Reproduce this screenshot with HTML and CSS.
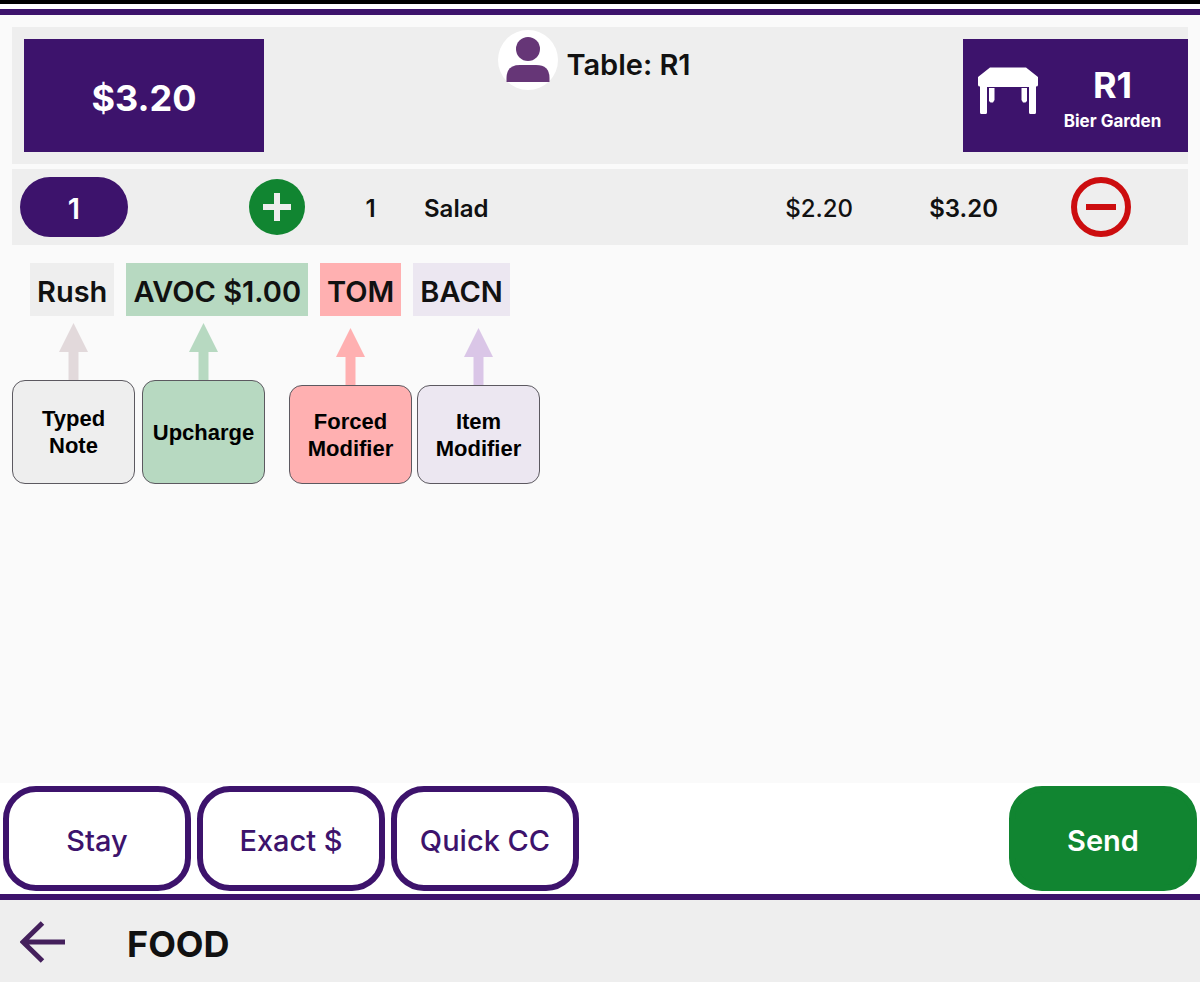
FILE: index.html
```
<!DOCTYPE html>
<html lang="en">
<head>
<meta charset="utf-8">
<title>Table R1</title>
<link rel="stylesheet" href="styles.css">
</head>
<body>
<div class="topbar"></div>
<main class="order">
  <header class="summary">
    <button class="total" type="button">$3.20</button>
    <div class="guest">
      <svg class="avatar" viewBox="0 0 60 60" aria-hidden="true">
        <circle cx="30" cy="30" r="30" fill="#fff"/>
        <circle cx="30" cy="19" r="12" fill="#663677"/>
        <path d="M8.500 52V48Q8.500 35 22 35H38Q51.500 35 51.500 48V52Z" fill="#663677"/>
      </svg>
      <h1 class="guest-name">Table: R1</h1>
    </div>
    <button class="table-card" type="button">
      <svg class="table-icon" viewBox="0 0 60 48" aria-hidden="true">
        <g fill="#fff">
          <path d="M12 .5H48L60 10V18Q60 19.500 58 19.500V45.500Q58 47 56.500 47H52.500Q51 47 51 45.500V20H9V45.500Q9 47 7.500 47H3.500Q2 47 2 45.500V19.500Q0 19.500 0 18V10Z"/>
          <path d="M11 21H16.500V33L15 35.500H12.500L11 34Z"/>
          <path d="M43.500 21H49V34L47.500 35.500H45L43.500 33Z"/>
        </g>
      </svg>
      <span class="table-text"><strong class="table-id">R1</strong><span class="table-area">Bier Garden</span></span>
    </button>
  </header>

  <section class="line">
    <button class="seat" type="button">1</button>
    <button class="icon-button" type="button" aria-label="Add one">
      <svg class="icon-add" viewBox="0 0 56 56"><circle cx="28" cy="28" r="28" fill="#118531"/><path d="M28 14V42M14 28H42" stroke="#eee" stroke-width="6"/></svg>
    </button>
    <span class="quantity">1</span>
    <span class="item">Salad</span>
    <span class="price">$2.20</span>
    <span class="price price-total">$3.20</span>
    <button class="icon-button icon-button-end" type="button" aria-label="Remove one">
      <svg class="icon-remove" viewBox="0 0 60 60"><circle cx="30" cy="30" r="27" fill="none" stroke="#cc0d0f" stroke-width="6"/><path d="M15 30H45" stroke="#cc0d0f" stroke-width="6"/></svg>
    </button>
  </section>

  <ul class="tags">
    <li class="tag note">Rush</li>
    <li class="tag upcharge">AVOC $1.00</li>
    <li class="tag forced">TOM</li>
    <li class="tag modifier">BACN</li>
  </ul>

  <div class="legend">
    <div class="legend-pair">
      <div class="legend-item">
        <svg class="arrow" viewBox="0 0 29 57" aria-hidden="true"><path d="M14.500 0L29 29H19.500V57H9.500V29H0Z" fill="#e2d9db"/></svg>
        <div class="legend-box note">Typed Note</div>
      </div>
      <div class="legend-item">
        <svg class="arrow" viewBox="0 0 29 57" aria-hidden="true"><path d="M14.500 0L29 29H19.500V57H9.500V29H0Z" fill="#b7d9c1"/></svg>
        <div class="legend-box upcharge">Upcharge</div>
      </div>
    </div>
    <div class="legend-pair legend-pair-short">
      <div class="legend-item">
        <svg class="arrow" viewBox="0 0 29 57" aria-hidden="true"><path d="M14.500 0L29 29H19.500V57H9.500V29H0Z" fill="#ffb0b1"/></svg>
        <div class="legend-box forced">Forced Modifier</div>
      </div>
      <div class="legend-item">
        <svg class="arrow" viewBox="0 0 29 57" aria-hidden="true"><path d="M14.500 0L29 29H19.500V57H9.500V29H0Z" fill="#dac6e7"/></svg>
        <div class="legend-box modifier">Item Modifier</div>
      </div>
    </div>
  </div>
</main>

<div class="actions">
  <button class="action" type="button">Stay</button>
  <button class="action" type="button">Exact $</button>
  <button class="action" type="button">Quick CC</button>
  <button class="action send" type="button">Send</button>
</div>
<footer class="category">
  <button class="back" type="button" aria-label="Back">
    <svg class="back-icon" viewBox="0 0 46 42"><path d="M45 21H4M22.500 2L3 21L22.500 40" fill="none" stroke="#44205c" stroke-width="5"/></svg>
  </button>
  <h2 class="category-name">FOOD</h2>
</footer>
</body>
</html>
```
FILE: styles.css
```
* { box-sizing: border-box; }
body {
  margin: 0;
  min-height: 100vh;
  display: flex;
  flex-direction: column;
  background: #fff;
  color: #111;
  font-family: Inter, "Liberation Sans", sans-serif;
}
button {
  margin: 0;
  padding: 0;
  border: 0;
  background: none;
  color: inherit;
  font: inherit;
}
h1, h2 { margin: 0; }
svg { display: block; }

.topbar {
  height: 15px;
  border-top: 4px solid #000;
  border-bottom: 6px solid #3d136c;
}
.order {
  flex: 1;
  padding: 12px;
  background: #fafafa;
}

.summary {
  display: grid;
  grid-template-columns: 240px 1fr 225px;
  height: 137px;
  padding: 12px 0 12px 12px;
  background: #eee;
}
.total {
  background: #3d136c;
  color: #fff;
  font-size: 36px;
  font-weight: 700;
  padding-top: 4px;
}
.guest {
  display: flex;
  justify-content: center;
  align-items: center;
  gap: 8px;
  height: 60px;
  margin: -9px 38px 0 0;
}
.avatar { width: 60px; height: 60px; }
.guest-name { font-size: 29px; font-weight: 600; padding-top: 8px; }
.table-card {
  display: flex;
  align-items: center;
  background: #3d136c;
  color: #fff;
  padding: 0 15px;
}
.table-icon { width: 60px; height: 48px; margin-bottom: 10px; }
.table-text { flex: 1; padding: 6px 0 0 14px; text-align: center; }
.table-id, .table-area { display: block; white-space: nowrap; }
.table-id { font-size: 36px; font-weight: 700; line-height: 44px; }
.table-area { font-size: 17px; font-weight: 700; line-height: 28px; }

.line {
  display: grid;
  grid-template-columns: 229px 56px 119px 1fr 145px 145px 133px;
  align-items: center;
  height: 76px;
  margin-top: 5px;
  padding: 0 57px 0 8px;
  background: #eee;
  font-size: 24px;
  font-weight: 600;
  line-height: 32px;
}
.seat {
  width: 108px;
  height: 60px;
  border-radius: 30px;
  background: #3d136c;
  color: #fff;
  font-size: 29px;
  padding-top: 4px;
}
.icon-add { width: 56px; height: 56px; }
.icon-remove { width: 60px; height: 60px; }
.icon-button-end { justify-self: end; }
.quantity, .item, .price { padding-top: 3px; }
.quantity { padding-left: 12px; text-align: center; }
.price { text-align: right; font-weight: 500; }
.price-total { font-weight: 600; }

.tags {
  display: flex;
  gap: 12px;
  margin: 18px 0 0;
  padding: 0 18px;
  list-style: none;
}
.tag {
  height: 53px;
  padding: 4px 7px 0;
  font-size: 29px;
  font-weight: 600;
  line-height: 49px;
}
.note { background: #eee; }
.upcharge { background: #b7d9c1; }
.forced { background: #ffb0b1; }
.modifier { background: #ece7f1; }

.legend {
  display: flex;
  align-items: flex-end;
  gap: 24px;
  margin-top: 7px;
}
.legend-pair { display: flex; gap: 7px; }
.legend-pair-short { gap: 5px; }
.legend-item { display: flex; flex-direction: column; align-items: center; }
.arrow { width: 29px; height: 57px; }
.legend-box {
  display: flex;
  align-items: center;
  justify-content: center;
  width: 123px;
  height: 104px;
  padding: 0 10px;
  border: 1px solid #5c5960;
  border-radius: 13px;
  color: #000;
  font-family: "Liberation Sans", Arial, sans-serif;
  font-size: 22px;
  font-weight: 700;
  line-height: 27px;
  text-align: center;
}
.legend-pair-short .legend-box { height: 99px; }

.actions {
  display: flex;
  gap: 6px;
  padding: 3px;
  border-bottom: 6px solid #3d136c;
}
.action {
  width: 188px;
  height: 105px;
  padding-top: 4px;
  border: 6px solid #3d136c;
  border-radius: 33px;
  color: #3d136c;
  font-size: 29px;
  font-weight: 500;
}
.send {
  margin-left: auto;
  border-color: #118531;
  background: #118531;
  color: #fff;
  font-weight: 600;
}
.category {
  display: flex;
  align-items: center;
  gap: 61px;
  height: 82px;
  padding: 2px 20px 0;
  background: #eee;
}
.back-icon { width: 46px; height: 42px; }
.category-name { font-size: 36px; font-weight: 700; padding-top: 4px; }
```
